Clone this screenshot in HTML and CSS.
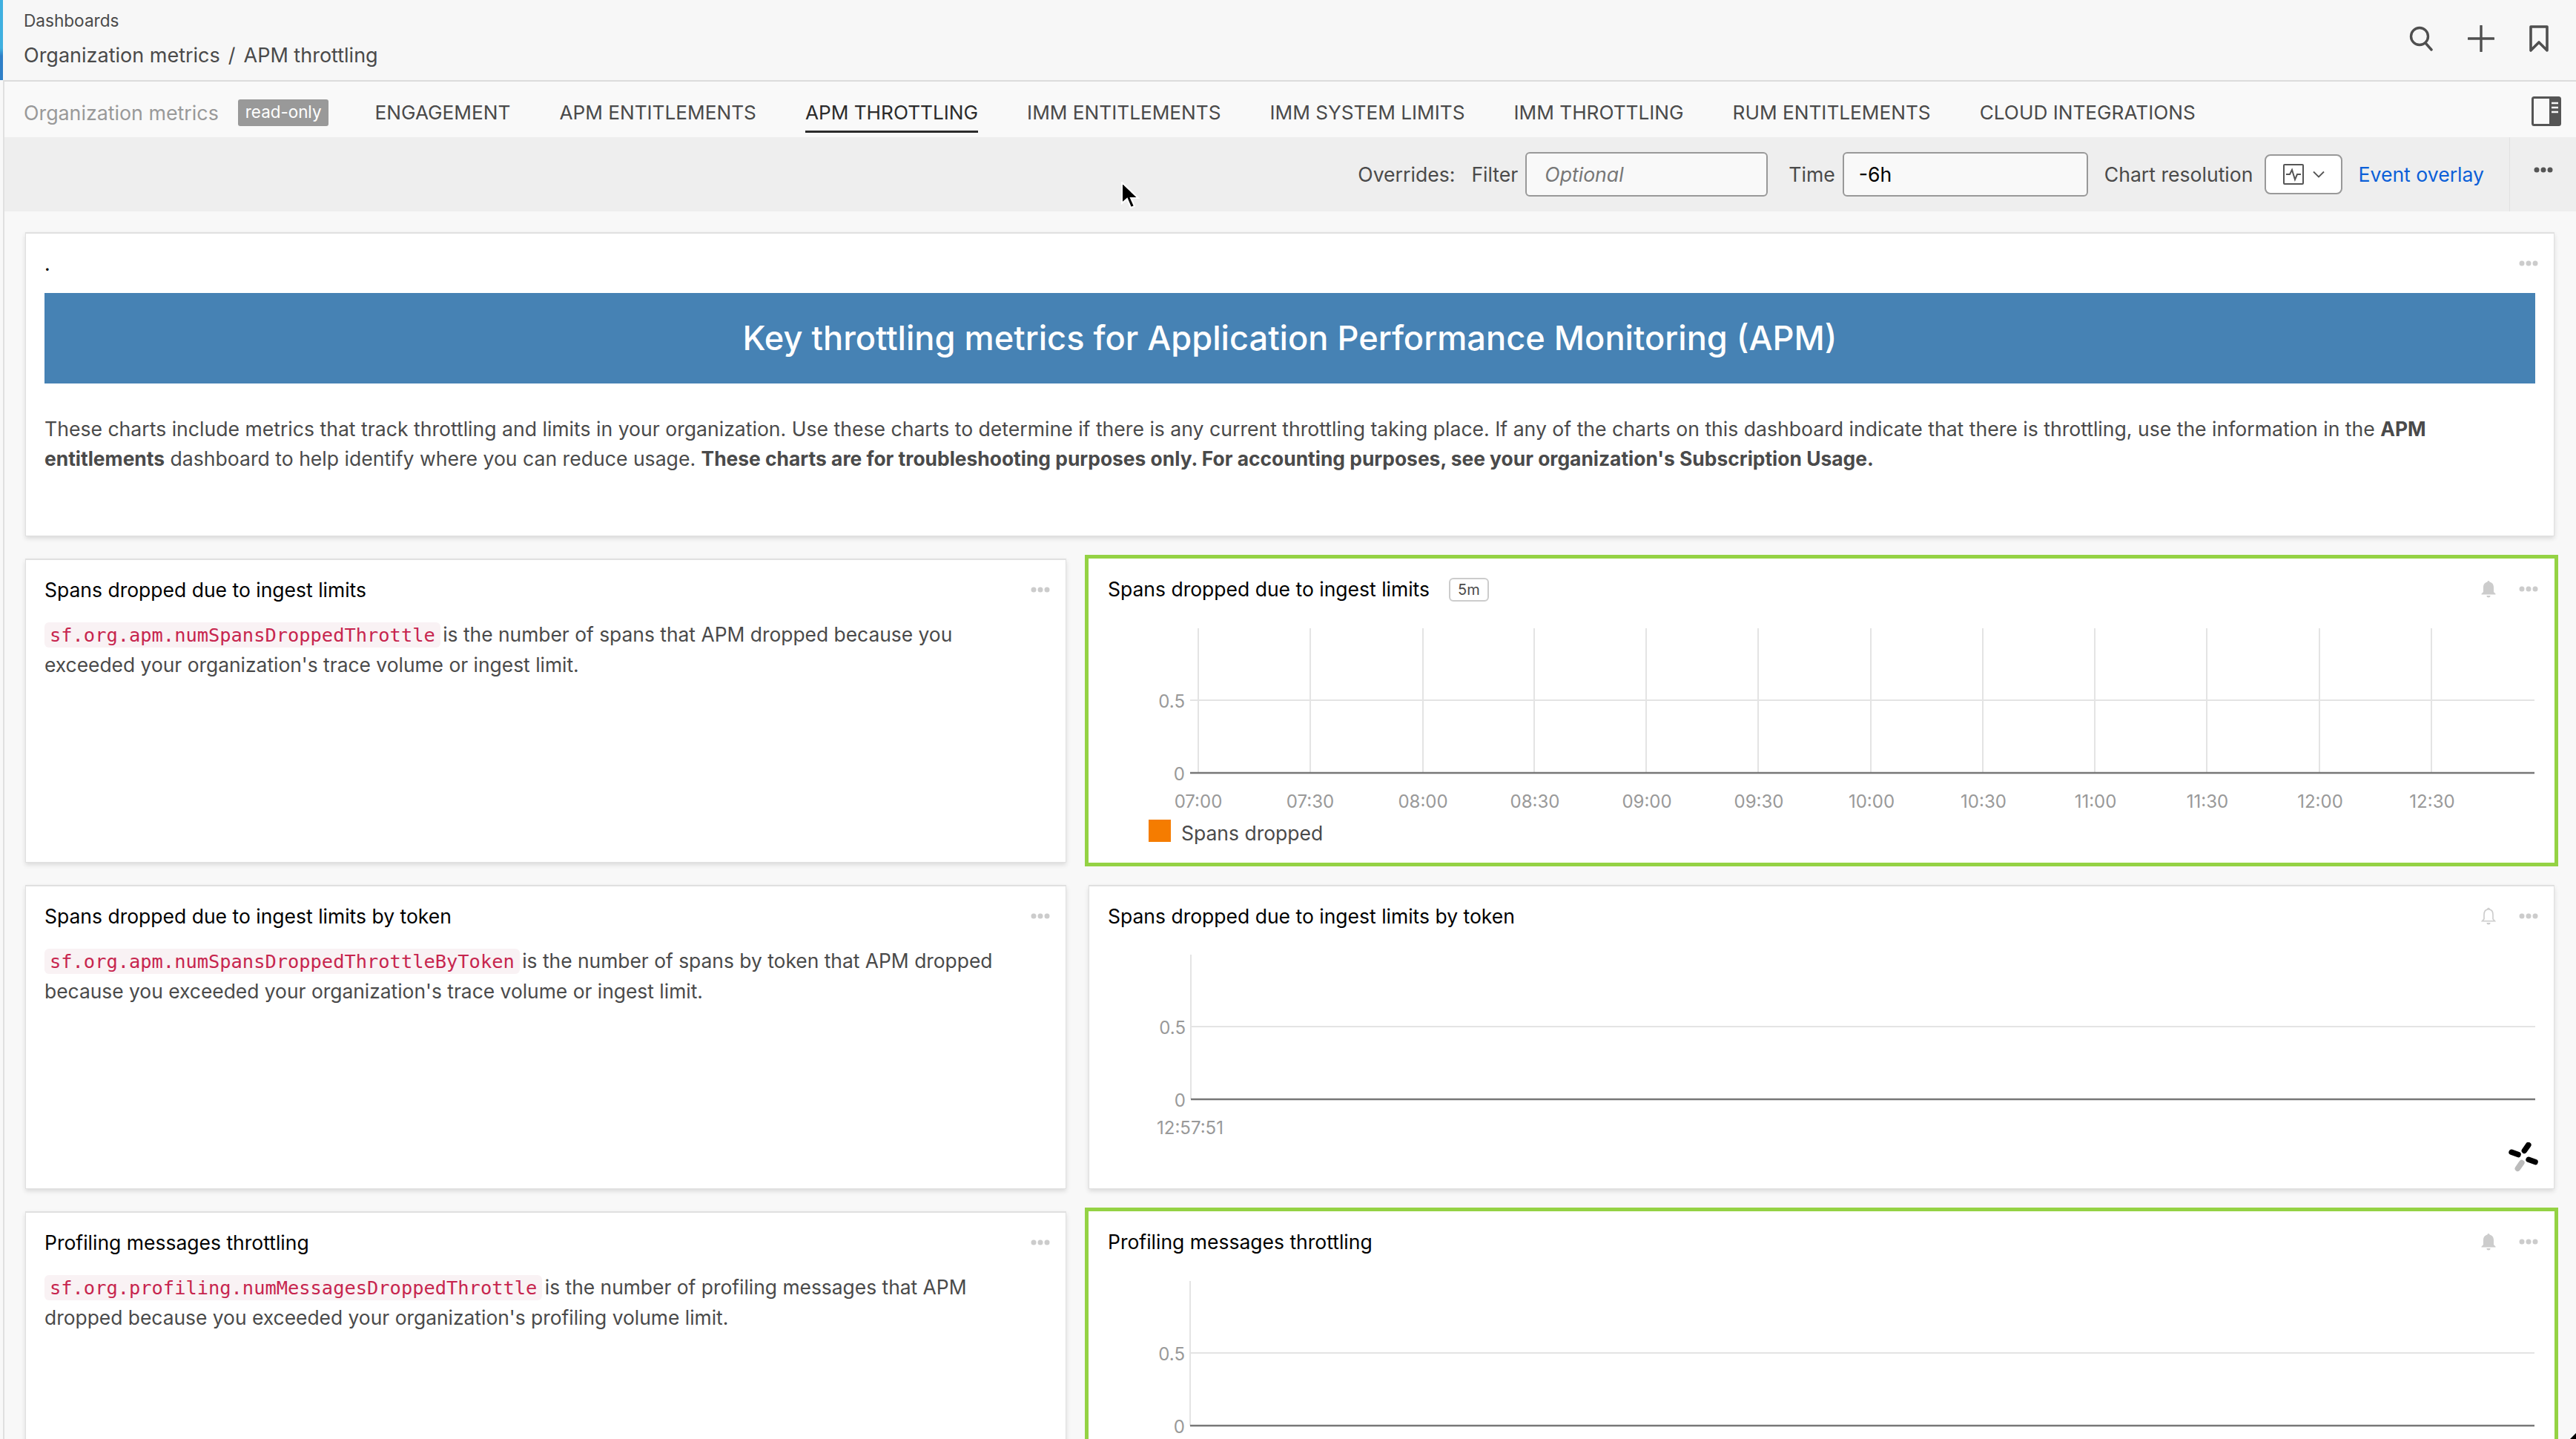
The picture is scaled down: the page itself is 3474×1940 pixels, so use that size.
FILE: index.html
```html
<!DOCTYPE html>
<html lang="en">
  <head>
    <meta charset="UTF-8" />
    <title>APM throttling</title>
    <link rel="stylesheet" href="styles.css">
  </head>
  <body>
    <header class="topbar">
      <div class="crumbs">
        <div class="crumb-root">Dashboards</div>
        <div class="crumb-path">Organization metrics<span class="crumb-sep">/</span>APM throttling</div>
      </div>
      <div class="top-icons">
        <svg width="32" height="34" viewBox="0 0 32 34" fill="none" stroke="#4f4f4f" stroke-width="3.4" stroke-linecap="round"><circle cx="14" cy="14" r="11.5"/><path d="M22 23l8 9"/></svg>
        <svg width="36" height="36" viewBox="0 0 36 36" fill="none" stroke="#4f4f4f" stroke-width="3.4" stroke-linecap="round"><path d="M18 1v34M1 18h34"/></svg>
        <svg width="26" height="36" viewBox="0 0 26 36" fill="none" stroke="#4f4f4f" stroke-width="3.6" stroke-linejoin="round"><path d="M2 2h22v32l-11-11-11 11z"/></svg>
      </div>
    </header>

    <nav class="tabs">
      <span class="tabs-group">Organization metrics</span>
      <span class="badge">read-only</span>
      <a class="tab tab-first">ENGAGEMENT</a>
      <a class="tab">APM ENTITLEMENTS</a>
      <a class="tab tab-active">APM THROTTLING</a>
      <a class="tab">IMM ENTITLEMENTS</a>
      <a class="tab">IMM SYSTEM LIMITS</a>
      <a class="tab">IMM THROTTLING</a>
      <a class="tab">RUM ENTITLEMENTS</a>
      <a class="tab">CLOUD INTEGRATIONS</a>
      <svg class="panel-toggle" width="40" height="40" viewBox="0 0 40 40"><rect x="1.5" y="1.5" width="37" height="37" rx="2" fill="none" stroke="#555" stroke-width="3"/><rect x="24" y="1.5" width="14.5" height="37" fill="#555"/><path d="M27 9h9M27 15h9M27 21h9" stroke="#f8f8f8" stroke-width="2.5"/></svg>
    </nav>

    <div class="toolbar">
      <span class="tool-label overrides">Overrides:</span>
      <span class="tool-label">Filter</span>
      <input class="tool-input filter-input" type="text" placeholder="Optional">
      <span class="tool-label time-label">Time</span>
      <input class="tool-input time-input" type="text" value="-6h">
      <span class="tool-label res-label">Chart resolution</span>
      <button class="res-button">
        <svg width="28" height="28" viewBox="0 0 28 28" fill="none" stroke="#555" stroke-width="2"><rect x="1" y="1" width="26" height="26" rx="1"/><path d="M4 14h5l3-6 4 13 3-7h5"/></svg>
        <svg width="16" height="10" viewBox="0 0 16 10" fill="none" stroke="#555" stroke-width="1.8"><path d="M1 1.500l7 7 7-7"/></svg>
      </button>
      <a class="event-link">Event overlay</a>
      <div class="tool-more">
        <svg width="26" height="8" viewBox="0 0 26 8" fill="#555"><circle cx="4" cy="4" r="3.5"/><circle cx="13" cy="4" r="3.5"/><circle cx="22" cy="4" r="3.5"/></svg>
      </div>
    </div>

    <svg class="cursor" width="26" height="38" viewBox="0 0 26 38"><path d="M2 1v28l7-6 5 12 5-2-5-11h10z" fill="#000" stroke="#fff" stroke-width="2"/></svg>

    <main class="board">
      <section class="panel panel-wide">
        <div class="panel-head">
          <h3 class="panel-title">.</h3>
          <div class="panel-actions"><svg class="dots" width="26" height="8" viewBox="0 0 26 8"><circle cx="4" cy="4" r="3.5"/><circle cx="13" cy="4" r="3.5"/><circle cx="22" cy="4" r="3.5"/></svg></div>
        </div>
        <div class="banner">Key throttling metrics for Application Performance Monitoring (APM)</div>
        <p class="panel-text intro">These charts include metrics that track throttling and limits in your organization. Use these charts to determine if there is any current throttling taking place. If any of the charts on this dashboard indicate that there is throttling, use the information in the <b>APM<br>entitlements</b> dashboard to help identify where you can reduce usage. <b>These charts are for troubleshooting purposes only. For accounting purposes, see your organization's Subscription Usage.</b></p>
      </section>

      <section class="panel">
        <div class="panel-head">
          <h3 class="panel-title">Spans dropped due to ingest limits</h3>
          <div class="panel-actions"><svg class="dots" width="26" height="8" viewBox="0 0 26 8"><circle cx="4" cy="4" r="3.5"/><circle cx="13" cy="4" r="3.5"/><circle cx="22" cy="4" r="3.5"/></svg></div>
        </div>
        <p class="panel-text"><code>sf.org.apm.numSpansDroppedThrottle</code> is the number of spans that APM dropped because you<br>exceeded your organization's trace volume or ingest limit.</p>
      </section>

      <section class="panel panel-active">
        <div class="panel-head">
          <h3 class="panel-title">Spans dropped due to ingest limits<span class="res-tag">5m</span></h3>
          <div class="panel-actions">
            <svg class="bell" width="20" height="24" viewBox="0 0 20 24"><path d="M10 1a1.500 1.500 0 0 1 1.500 1.600C15 3.400 17 6 17 10v6l2.500 2.500v1H.5v-1L3 16v-6c0-4 2-6.600 5.500-7.400A1.500 1.500 0 0 1 10 1zM7.500 21h5a2.500 2.500 0 0 1-5 0z" fill="#ccc"/></svg>
            <svg class="dots" width="26" height="8" viewBox="0 0 26 8"><circle cx="4" cy="4" r="3.5"/><circle cx="13" cy="4" r="3.5"/><circle cx="22" cy="4" r="3.5"/></svg>
          </div>
        </div>
        <svg class="chart" width="1975" height="262" viewBox="0 0 1975 262">
          <g class="grid">
            <path d="M148 12v195M299 12v195M451 12v195M601 12v195M752 12v195M903 12v195M1055 12v195M1206 12v195M1357 12v195M1508 12v195M1660 12v195M1811 12v195"/>
            <path d="M137 109h1813"/>
          </g>
          <path class="zero" d="M137 207h1813"/>
          <text class="y-label" x="130" y="119">0.5</text>
          <text class="y-label" x="130" y="217">0</text>
          <g class="x-labels">
            <text x="148" y="254">07:00</text><text x="299" y="254">07:30</text><text x="451" y="254">08:00</text>
            <text x="602" y="254">08:30</text><text x="753" y="254">09:00</text><text x="904" y="254">09:30</text>
            <text x="1056" y="254">10:00</text><text x="1207" y="254">10:30</text><text x="1358" y="254">11:00</text>
            <text x="1509" y="254">11:30</text><text x="1661" y="254">12:00</text><text x="1812" y="254">12:30</text>
          </g>
        </svg>
        <div class="legend"><span class="swatch"></span>Spans dropped</div>
      </section>

      <section class="panel">
        <div class="panel-head">
          <h3 class="panel-title">Spans dropped due to ingest limits by token</h3>
          <div class="panel-actions"><svg class="dots" width="26" height="8" viewBox="0 0 26 8"><circle cx="4" cy="4" r="3.5"/><circle cx="13" cy="4" r="3.5"/><circle cx="22" cy="4" r="3.5"/></svg></div>
        </div>
        <p class="panel-text"><code>sf.org.apm.numSpansDroppedThrottleByToken</code> is the number of spans by token that APM dropped<br>because you exceeded your organization's trace volume or ingest limit.</p>
      </section>

      <section class="panel">
        <div class="panel-head">
          <h3 class="panel-title">Spans dropped due to ingest limits by token</h3>
          <div class="panel-actions">
            <svg class="bell" width="20" height="24" viewBox="0 0 20 24"><path d="M10 1.500a1 1 0 0 1 1 1.400C14.500 3.600 16 6.200 16 10v6l2.500 2.800H1.500L4 16v-6c0-3.800 1.500-6.400 5-7.100a1 1 0 0 1 1-1.400z" fill="none" stroke="#ccc" stroke-width="1.600"/><path d="M7.500 21h5a2.500 2.500 0 0 1-5 0z" fill="#ccc"/></svg>
            <svg class="dots" width="26" height="8" viewBox="0 0 26 8"><circle cx="4" cy="4" r="3.5"/><circle cx="13" cy="4" r="3.5"/><circle cx="22" cy="4" r="3.5"/></svg>
          </div>
        </div>
        <svg class="chart" width="1975" height="262" viewBox="0 0 1975 262">
          <g class="grid">
            <path d="M137 12v195"/>
            <path d="M137 109h1813"/>
          </g>
          <path class="zero" d="M137 207h1813"/>
          <text class="y-label" x="130" y="119">0.5</text>
          <text class="y-label" x="130" y="217">0</text>
          <g class="x-labels"><text x="136" y="254">12:57:51</text></g>
        </svg>
        <svg class="spinner" width="42" height="42" viewBox="0 0 42 42">
          <rect x="1" y="11" width="17" height="7.500" rx="3.700" transform="rotate(20 9 15)"/>
          <rect x="17" y="4" width="17" height="7.500" rx="3.700" transform="rotate(-55 25 8)"/>
          <rect x="24" y="21" width="17" height="7.500" rx="3.700" transform="rotate(20 32 25)"/>
          <rect class="spinner-faded" x="8" y="28" width="17" height="7.500" rx="3.700" transform="rotate(-55 16 32)"/>
        </svg>
      </section>

      <section class="panel">
        <div class="panel-head">
          <h3 class="panel-title">Profiling messages throttling</h3>
          <div class="panel-actions"><svg class="dots" width="26" height="8" viewBox="0 0 26 8"><circle cx="4" cy="4" r="3.5"/><circle cx="13" cy="4" r="3.5"/><circle cx="22" cy="4" r="3.5"/></svg></div>
        </div>
        <p class="panel-text"><code>sf.org.profiling.numMessagesDroppedThrottle</code> is the number of profiling messages that APM<br>dropped because you exceeded your organization's profiling volume limit.</p>
      </section>

      <section class="panel panel-active">
        <div class="panel-head">
          <h3 class="panel-title">Profiling messages throttling</h3>
          <div class="panel-actions">
            <svg class="bell" width="20" height="24" viewBox="0 0 20 24"><path d="M10 1a1.500 1.500 0 0 1 1.500 1.600C15 3.400 17 6 17 10v6l2.500 2.500v1H.5v-1L3 16v-6c0-4 2-6.600 5.500-7.400A1.500 1.500 0 0 1 10 1zM7.500 21h5a2.500 2.500 0 0 1-5 0z" fill="#ccc"/></svg>
            <svg class="dots" width="26" height="8" viewBox="0 0 26 8"><circle cx="4" cy="4" r="3.5"/><circle cx="13" cy="4" r="3.5"/><circle cx="22" cy="4" r="3.5"/></svg>
          </div>
        </div>
        <svg class="chart" width="1975" height="262" viewBox="0 0 1975 262">
          <g class="grid">
            <path d="M137 12v195"/>
            <path d="M137 109h1813"/>
          </g>
          <path class="zero" d="M137 207h1813"/>
          <text class="y-label" x="130" y="119">0.5</text>
          <text class="y-label" x="130" y="217">0</text>
        </svg>
      </section>
    </main>
    <div class="screen-corner"></div>
  </body>
</html>
```

FILE: styles.css
```css
html,
body {
  margin: 0;
  height: 1940px;
  overflow: hidden;
}
body {
  position: relative;
  font-family: Inter, "Noto Sans", sans-serif;
  background: #f8f8f8;
  color: #4a4a4a;
}
.topbar {
  position: relative;
  height: 108px;
  box-sizing: border-box;
  padding: 0 37px 0 32px;
  display: flex;
  align-items: center;
  justify-content: space-between;
  background: #f7f7f7;
}
.topbar::before {
  content: "";
  position: absolute;
  left: 0;
  top: 0;
  bottom: 0;
  width: 4px;
  background: linear-gradient(#3fb0e0 60%, #2f7fc7 70%);
}
.crumb-root {
  font-size: 22.6px;
  line-height: 28px;
  margin-top: -4px;
}
.crumb-path {
  font-size: 27px;
  line-height: 32px;
  margin-top: 17px;
}
.crumb-sep {
  margin: 0 11px;
}
.top-icons {
  display: flex;
  align-items: center;
  gap: 47px;
  margin-top: -4px;
}
.tabs {
  height: 77px;
  box-sizing: border-box;
  border-top: 2px solid #dcdcdc;
  border-left: 2px solid #e0e0e0;
  padding: 8px 20px 0 26px;
  margin-left: 4px;
  display: flex;
  align-items: center;
  font-size: 26.2px;
  background: #f9f9f9;
}
.tabs-group {
  font-size: 26.8px;
  color: #999;
}
.badge {
  margin-left: 26px;
  padding: 0 10px;
  height: 36px;
  line-height: 34px;
  border-radius: 3px;
  font-size: 22.4px;
  color: #fff;
  background: #999;
}
.tab {
  margin-left: 66px;
  height: 67px;
  line-height: 67px;
  box-sizing: border-box;
}
.tab-first {
  margin-left: 62px;
}
.tab-active {
  color: #2b2b2b;
  position: relative;
}
.tab-active::after {
  content: "";
  position: absolute;
  left: 0;
  right: 0;
  bottom: 6px;
  height: 3px;
  background: #2b2b2b;
}
.panel-toggle {
  margin-left: auto;
  margin-top: -4px;
}
.toolbar {
  height: 100px;
  margin-left: 4px;
  border-left: 2px solid #e0e0e0;
  display: flex;
  align-items: center;
  justify-content: flex-end;
  background: #eee;
  font-size: 26.6px;
}
.tool-label {
  margin-right: 10px;
}
.overrides {
  margin-right: 22px;
}
.tool-input {
  height: 60px;
  box-sizing: border-box;
  border: 2px solid #999;
  border-radius: 6px;
  padding: 0 24px;
  font: inherit;
  color: #000;
  background: #f9f9f9;
}
.tool-input::placeholder {
  font-style: italic;
  color: #777;
}
.filter-input {
  width: 327px;
}
.time-label {
  margin-left: 28px;
}
.time-input {
  width: 331px;
  padding: 0 20px;
}
.res-label {
  margin-left: 22px;
  margin-right: 16px;
}
.res-button {
  width: 105px;
  height: 54px;
  display: flex;
  align-items: center;
  justify-content: center;
  gap: 12px;
  padding: 0;
  border: 2px solid #999;
  border-radius: 8px;
  background: #fff;
}
.event-link {
  margin-left: 21px;
  color: #0b5fd8;
}
.tool-more {
  margin-left: 34px;
  width: 90px;
  height: 100px;
  box-sizing: border-box;
  border-left: 1px solid #e2e2e2;
  padding: 40px 0 0 32px;
}
.tool-more svg {
  display: block;
}
.cursor {
  position: absolute;
  left: 1511px;
  top: 245px;
}
.board {
  margin-left: 4px;
  padding: 28px 0 0 28px;
  display: grid;
  grid-template-columns: 1404px 1977px;
  grid-auto-rows: 410px;
  column-gap: 30px;
  row-gap: 30px;
  border-left: 2px solid #e0e0e0;
}
.panel {
  position: relative;
  box-sizing: border-box;
  background: #fff;
  border: 1px solid #e0e0e0;
  border-top-width: 2px;
  box-shadow: 0 3px 6px rgba(0, 0, 0, 0.12);
}
.panel-active {
  border: 0;
  box-shadow: none;
  outline: 5px solid #94d244;
}
.panel-wide {
  grid-column: 1 / -1;
}
.panel-head {
  height: 80px;
  box-sizing: border-box;
  padding: 0 21px 0 25px;
  display: flex;
  align-items: center;
  justify-content: space-between;
}
.panel-active .panel-head {
  height: 82px;
  padding: 0 22px 0 26px;
}
.panel-title {
  margin: 0;
  font-size: 26.5px;
  font-weight: 400;
  color: #000;
}
.panel-actions {
  display: flex;
  align-items: center;
  gap: 31px;
}
.dots {
  display: block;
  fill: #ccc;
}
.bell {
  display: block;
}
.res-tag {
  display: inline-block;
  margin-left: 26px;
  padding: 0 10px;
  height: 28px;
  line-height: 28px;
  border: 2px solid #ccc;
  border-radius: 6px;
  font-size: 20px;
  color: #4a4a4a;
  vertical-align: 2px;
}
.banner {
  margin: 0 25px;
  height: 122px;
  line-height: 122px;
  text-align: center;
  font-size: 45.2px;
  font-weight: 500;
  color: #fff;
  background: #4682b4;
}
.panel-text {
  margin: 0;
  padding: 0 25px;
  font-size: 26.4px;
  line-height: 40px;
  white-space: nowrap;
}
.intro {
  margin-top: 41px;
  font-size: 26.6px;
}
.panel-text b {
  font-size: 26.4px;
  font-weight: 700;
}
code {
  font-family: "DejaVu Sans Mono", monospace;
  font-size: 25.4px;
  color: #c7254e;
  background: #f9f2f4;
  border-radius: 6px;
  padding: 2px 7px;
  margin-right: -4px;
}
.chart {
  display: block;
}
.grid path {
  fill: none;
  stroke: #e4e4e4;
  stroke-width: 2;
}
.zero {
  fill: none;
  stroke: #777;
  stroke-width: 2.5;
}
.chart text {
  font-size: 24px;
  fill: #999;
}
.y-label {
  text-anchor: end;
}
.x-labels text {
  text-anchor: middle;
}
.legend {
  display: flex;
  align-items: center;
  gap: 14px;
  margin-top: 11px;
  padding-left: 81px;
  font-size: 26.5px;
  line-height: 30px;
}
.swatch {
  width: 30px;
  height: 30px;
  margin-top: -6px;
  background: #f57c00;
}
.spinner {
  position: absolute;
  right: 20px;
  bottom: 20px;
}
.spinner rect {
  fill: #000;
}
.spinner .spinner-faded {
  fill: #bbb;
}
.screen-corner {
  position: absolute;
  right: 0;
  bottom: 0;
  width: 8px;
  height: 8px;
  background: #000;
  clip-path: polygon(100% 0, 100% 100%, 0 100%);
}
```
